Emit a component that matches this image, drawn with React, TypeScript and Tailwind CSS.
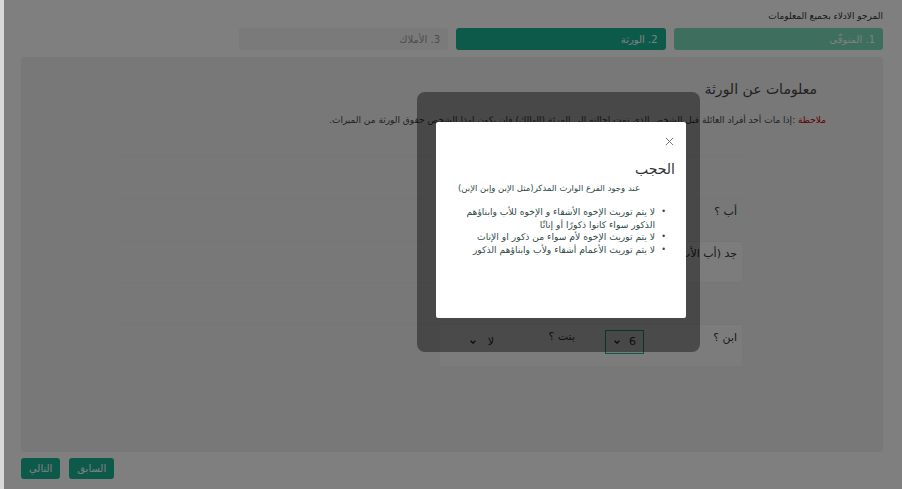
import React from "react";

const steps = [
  { name: "1. المتوفّى", cls: "bg-[#7adcbc] text-white" },
  { name: "2. الورثة", cls: "bg-[#1bb595] text-white" },
  { name: "3. الأملاك", cls: "bg-[#f4f4f4] text-[#9a9a9a]" },
];

const rules = [
  "لا يتم توريث الإخوه الأشقاء و الإخوه للأب وابناؤهم الذكور سواء كانوا ذكورًا أو إناثًا",
  "لا يتم توريث الإخوه لأم سواء من ذكور او الإناث",
  "لا يتم توريث الأعمام أشقاء ولأب وابناؤهم الذكور",
];

function Chevron() {
  return (
    <svg width="8" height="8" viewBox="0 0 10 10" className="shrink-0">
      <path d="M2 3.5 L5 6.5 L8 3.5" fill="none" stroke="#222" strokeWidth="1.6" />
    </svg>
  );
}

function Select({ value, active }: { value: string; active?: boolean }) {
  return (
    <div
      className={
        "flex h-[24px] w-[39px] items-center justify-between px-[7px] text-[11px] " +
        (active ? "border border-[#1bb595] bg-[#f0f0f0]" : "bg-[#f8f8f8]")
      }
    >
      <span className="text-[#333]">{value}</span>
      <Chevron />
    </div>
  );
}

export default function App() {
  return (
    <div
      dir="rtl"
      className="relative h-[489px] w-[902px] overflow-hidden bg-white text-[#333]"
      style={{ fontFamily: '"DejaVu Sans", "Noto Sans", sans-serif' }}
    >
      <div className="flex h-full flex-col pl-[21px] pr-[19px] pt-[9px]">
        <div className="text-[9px] leading-[14px] text-[#333]">المرجو الادلاء بجميع المعلومات</div>

        <div className="mt-[5px] grid grid-cols-4 gap-[8px]">
          {steps.map((s) => (
            <div
              key={s.name}
              className={"flex h-[22px] items-center rounded-[3px] px-[8px] text-[10px] " + s.cls}
            >
              {s.name}
            </div>
          ))}
        </div>

        <div className="mt-[7px] h-[395px] rounded-[4px] bg-[#f0f0f0] pt-[21px]">
          <h2 className="mr-[66px] text-[14px] leading-[22px] text-[#444]">معلومات عن الورثة</h2>
          <p className="mr-[57px] mt-[13px] text-[9px] leading-[14px] text-[#444]">
            <span className="text-[#c00000]">ملاحظة</span> :إذا مات أحد أفراد العائلة قبل الشخص الذي تمت إحالته الى
            المرئة (الهالك) فإن يكون لهذا الشخص حقوق الورثة من الميراث.
          </p>

          <div className="mr-[141px] ml-[99px] mt-[29px] flex flex-col">
            <div className="h-[42px] border-t border-[#eaeaea]" />
            <div className="flex h-[43px] items-start border-t border-[#eaeaea] pr-[5px] pt-[5px] text-[11px]">
              أب ؟
            </div>
            <div className="h-[41px] border-t border-[#eaeaea]">
              <div className="flex h-full w-[300px] items-start bg-[#f8f8f8] pr-[5px] pt-[4px] text-[11px]">
                جد (أب الأب)
              </div>
            </div>
            <div className="h-[42px] border-t border-[#eaeaea]" />
            <div className="h-[42px] border-t border-[#eaeaea]">
              <div className="flex h-full w-[302px] items-start bg-[#f8f8f8] pr-[5px] pt-[5px] text-[11px]">
                <span className="w-[93px]">ابن ؟</span>
                <Select value="6" active />
                <span className="mr-[30px] mt-[-1px] w-[74px]">بنت ؟</span>
                <Select value="لا" />
              </div>
            </div>
          </div>
        </div>

        <div className="mt-[6px] flex justify-end gap-[9px]">
          <button className="h-[21px] rounded-[3px] bg-[#1bb595] px-[8px] text-[10px] text-white">السابق</button>
          <button className="h-[21px] rounded-[3px] bg-[#1bb595] px-[8px] text-[10px] text-white">التالي</button>
        </div>
      </div>

      {/* backdrop */}
      <div className="absolute inset-0 bg-black/50" />
      <div className="absolute left-0 top-0 h-full w-[4px] bg-[#d8d8d8]" />

      {/* dialog frame */}
      <div className="absolute left-[417px] top-[92px] h-[260px] w-[283px] rounded-[8px] bg-black/40" />

      <div className="absolute left-[436px] top-[122px] h-[196px] w-[250px] rounded-[2px] bg-white px-[11px] pt-[11px]">
        <div className="flex justify-start">
          <svg width="9" height="9" viewBox="0 0 10 10" className="mr-[1px] mt-[4px]">
            <path d="M1 1 L9 9 M9 1 L1 9" stroke="#777" strokeWidth="1.1" />
          </svg>
        </div>
        <h3 className="mt-[12px] text-[14px] leading-[22px] text-[#333]">الحجب</h3>
        <p className="mr-[35px] mt-[1px] whitespace-nowrap text-[8.5px] leading-[14px] text-[#2f4a48]">
          عند وجود الفرع الوارث المذكر(مثل الإبن وإبن الإبن)
        </p>
        <ul className="mr-[9px] mt-[11px] text-[9.2px] leading-[12.5px] text-[#2f4a48]">
          {rules.map((r) => (
            <li key={r} className="flex">
              <span className="w-[11px] shrink-0 text-[8px]">•</span>
              <span className="w-[198px]">{r}</span>
            </li>
          ))}
        </ul>
      </div>
    </div>
  );
}
